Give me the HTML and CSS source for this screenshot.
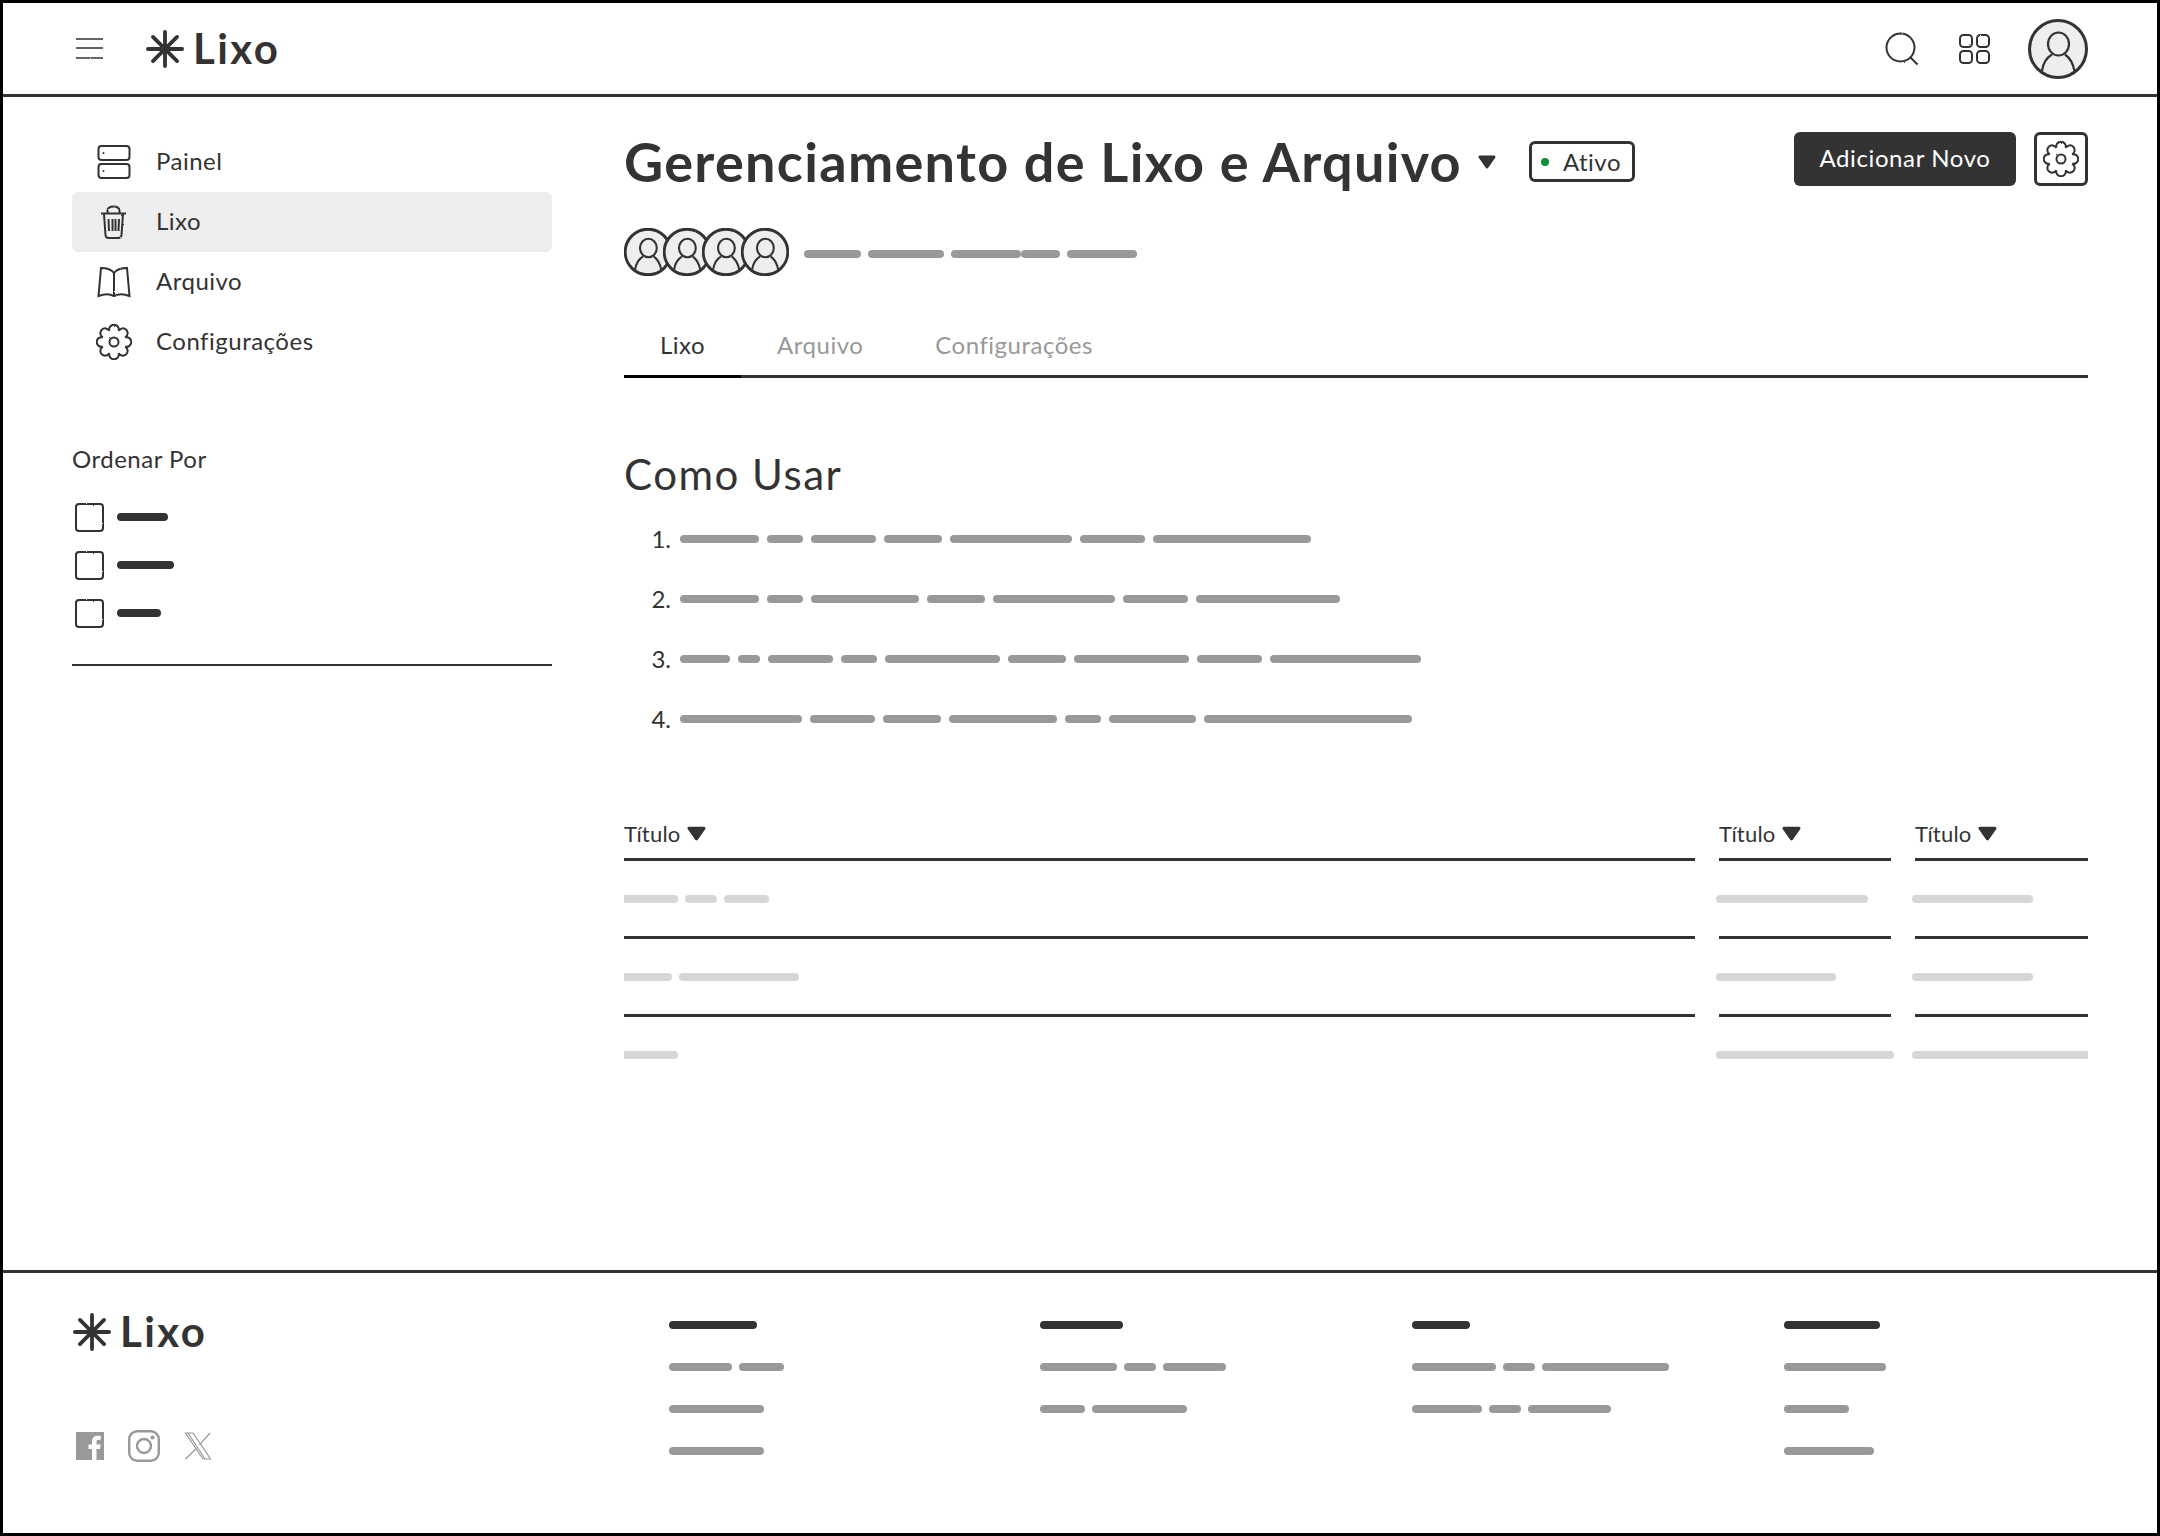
FILE: index.html
```html
<!DOCTYPE html>
<html lang="pt">
<head>
    <meta charset="UTF-8">
    <meta name="viewport" content="width=device-width, initial-scale=1.0">
    <title>Gerenciamento de Lixo e Arquivo</title>
    <link rel="stylesheet" href="styles.css">
</head>
<body>

<!-- Shared icon symbols and the filter that gives strokes a rough pencil edge -->
<svg class="defs" width="0" height="0" aria-hidden="true">
    <filter id="rough" x="-10%" y="-10%" width="120%" height="120%">
        <feTurbulence type="fractalNoise" baseFrequency="0.55" numOctaves="2" seed="4"/>
        <feDisplacementMap in="SourceGraphic" scale="1.8"/>
    </filter>
    <symbol id="star" viewBox="0 0 40 40">
        <g fill="none" stroke="#333" stroke-width="4" stroke-linecap="round">
            <path d="M20 2V38M2 20H38M7.3 7.3L32.7 32.7M32.7 7.3L7.3 32.7"/>
        </g>
    </symbol>
    <symbol id="gear" viewBox="0 0 36 36">
        <g fill="none" stroke="#333" stroke-width="2">
            <path d="M29.100 13.400A4.800 4.800 0 1 1 29.100 22.600A4.800 4.800 0 1 1 22.600 29.100A4.800 4.800 0 1 1 13.400 29.100A4.800 4.800 0 1 1 6.900 22.600A4.800 4.800 0 1 1 6.900 13.400A4.800 4.800 0 1 1 13.400 6.900A4.800 4.800 0 1 1 22.600 6.900A4.800 4.800 0 1 1 29.100 13.400Z"/>
            <circle cx="18" cy="18" r="4.500"/>
        </g>
    </symbol>
    <symbol id="person" viewBox="0 0 60 60">
        <circle class="ring" cx="30" cy="30" r="28.500" fill="#eee" stroke="#333"/>
        <g class="figure" fill="none" stroke="#333">
            <ellipse cx="30.500" cy="25" rx="10.500" ry="11.500"/>
            <path d="M14 52C15 44 18 39 24 35.500M37 35.500C42 39 45 44 46.500 52"/>
        </g>
    </symbol>
    <symbol id="caret" viewBox="0 0 18 14">
        <path d="M2 2H16L9 12Z" fill="#333" stroke="#333" stroke-width="3" stroke-linejoin="round"/>
    </symbol>
</svg>

<div class="page">

    <header class="topbar">
        <svg class="icon rough" viewBox="0 0 36 36">
            <path d="M4 8H31M4 17H31M4 27H31" fill="none" stroke="#333" stroke-width="1.600"/>
        </svg>
        <div class="logo top-logo">
            <svg class="logo-star"><use href="#star"/></svg>
            <span class="logo-text">Lixo</span>
        </div>
        <div class="topbar-right">
            <svg class="icon rough" viewBox="0 0 36 36">
                <circle cx="16.500" cy="16.500" r="14" fill="none" stroke="#333" stroke-width="2"/>
                <path d="M26.500 26.500L33.500 33.500" stroke="#333" stroke-width="2"/>
            </svg>
            <svg class="icon rough" viewBox="0 0 36 36">
                <g fill="none" stroke="#333" stroke-width="2">
                    <rect x="4" y="4" width="12" height="12" rx="3.500"/>
                    <rect x="21" y="4" width="12" height="12" rx="3.500"/>
                    <rect x="4" y="20" width="12" height="12" rx="3.500"/>
                    <rect x="21" y="20" width="12" height="12" rx="3.500"/>
                </g>
            </svg>
            <svg class="avatar-big"><use href="#person"/></svg>
        </div>
    </header>

    <div class="layout">

        <!-- Sidebar -->
        <aside class="sidebar">
            <nav class="side-nav">
                <a class="side-item">
                    <svg class="icon rough" viewBox="0 0 36 36">
                        <g fill="none" stroke="#333" stroke-width="2">
                            <rect x="2.500" y="2" width="31" height="14" rx="3"/>
                            <rect x="2.500" y="20" width="31" height="14" rx="3"/>
                        </g>
                        <circle cx="7.500" cy="9" r="1" fill="#333"/>
                        <circle cx="7.500" cy="27" r="1" fill="#333"/>
                    </svg>
                    <span>Painel</span>
                </a>
                <a class="side-item active">
                    <svg class="icon rough" viewBox="0 0 36 36">
                        <g fill="none" stroke="#333" stroke-width="2">
                            <path d="M5 9.500H30M8 10L9.500 31Q9.700 34 12.500 34H22.500Q25.300 34 25.500 31L27 10"/>
                            <path d="M11.500 9.500V7Q11.500 2.500 17.500 2.500T23.500 7V9.500"/>
                            <path d="M12.500 15L13 27M16.500 15V27M19.500 15V27M23 15L22.500 27"/>
                        </g>
                    </svg>
                    <span>Lixo</span>
                </a>
                <a class="side-item">
                    <svg class="icon rough" viewBox="0 0 36 36">
                        <g fill="none" stroke="#333" stroke-width="2">
                            <path d="M18 9C15 5 10 4 5 4L2.500 32C8 30 14 30 18 32C22 30 28 30 33.500 32L31 4C26 4 21 5 18 9V32"/>
                        </g>
                    </svg>
                    <span>Arquivo</span>
                </a>
                <a class="side-item">
                    <svg class="icon rough"><use href="#gear"/></svg>
                    <span>Configurações</span>
                </a>
            </nav>

            <div class="sort">
                <h3 class="sort-title">Ordenar Por</h3>
                <div class="sort-row"><span class="check"></span><span class="bar dark" style="width:51px"></span></div>
                <div class="sort-row"><span class="check"></span><span class="bar dark" style="width:57px"></span></div>
                <div class="sort-row"><span class="check"></span><span class="bar dark" style="width:44px"></span></div>
            </div>
        </aside>

        <!-- Main content -->
        <main class="content">
            <div class="title-row">
                <h1 class="page-title">Gerenciamento de Lixo e Arquivo</h1>
                <svg class="title-caret"><use href="#caret"/></svg>
                <span class="badge"><i class="dot"></i>Ativo</span>
                <button class="btn-add">Adicionar Novo</button>
                <button class="btn-gear"><svg class="gear-small rough"><use href="#gear"/></svg></button>
            </div>

            <div class="members">
                <div class="avatars">
                    <svg class="avatar-small"><use href="#person"/></svg>
                    <svg class="avatar-small"><use href="#person"/></svg>
                    <svg class="avatar-small"><use href="#person"/></svg>
                    <svg class="avatar-small"><use href="#person"/></svg>
                </div>
                <div class="bars">
                    <span class="bar" style="width:57px"></span>
                    <span class="bar" style="width:76px"></span>
                    <span class="bar joined" style="width:70px"></span>
                    <span class="bar" style="width:39px"></span>
                    <span class="bar" style="width:70px"></span>
                </div>
            </div>

            <div class="tabs">
                <a class="tab active">Lixo</a>
                <a class="tab">Arquivo</a>
                <a class="tab">Configurações</a>
            </div>

            <h2 class="howto-title">Como Usar</h2>
            <ol class="howto">
                <li>
                    <span class="num">1.</span>
                    <span class="bar" style="width:79px"></span><span class="bar" style="width:36px"></span><span class="bar" style="width:65px"></span><span class="bar" style="width:58px"></span><span class="bar" style="width:122px"></span><span class="bar" style="width:65px"></span><span class="bar" style="width:158px"></span>
                </li>
                <li>
                    <span class="num">2.</span>
                    <span class="bar" style="width:79px"></span><span class="bar" style="width:36px"></span><span class="bar" style="width:108px"></span><span class="bar" style="width:58px"></span><span class="bar" style="width:122px"></span><span class="bar" style="width:65px"></span><span class="bar" style="width:144px"></span>
                </li>
                <li>
                    <span class="num">3.</span>
                    <span class="bar" style="width:50px"></span><span class="bar" style="width:22px"></span><span class="bar" style="width:65px"></span><span class="bar" style="width:36px"></span><span class="bar" style="width:115px"></span><span class="bar" style="width:58px"></span><span class="bar" style="width:115px"></span><span class="bar" style="width:65px"></span><span class="bar" style="width:151px"></span>
                </li>
                <li>
                    <span class="num">4.</span>
                    <span class="bar" style="width:122px"></span><span class="bar" style="width:65px"></span><span class="bar" style="width:58px"></span><span class="bar" style="width:108px"></span><span class="bar" style="width:36px"></span><span class="bar" style="width:87px"></span><span class="bar" style="width:208px"></span>
                </li>
            </ol>

            <div class="table">
                <div class="th">Título <svg class="th-caret"><use href="#caret"/></svg></div>
                <div class="th">Título <svg class="th-caret"><use href="#caret"/></svg></div>
                <div class="th">Título <svg class="th-caret"><use href="#caret"/></svg></div>

                <div class="td"><span class="bar light" style="width:57px"></span><span class="bar light" style="width:32px"></span><span class="bar light" style="width:45px"></span></div>
                <div class="td"><span class="bar light" style="width:152px"></span></div>
                <div class="td"><span class="bar light" style="width:121px"></span></div>

                <div class="td"><span class="bar light" style="width:51px"></span><span class="bar light" style="width:120px"></span></div>
                <div class="td"><span class="bar light" style="width:120px"></span></div>
                <div class="td"><span class="bar light" style="width:121px"></span></div>

                <div class="td last"><span class="bar light" style="width:57px"></span></div>
                <div class="td last"><span class="bar light" style="width:178px"></span></div>
                <div class="td last"><span class="bar light" style="width:180px"></span></div>
            </div>
        </main>
    </div>

    <footer class="footer">
        <div class="footer-brand">
            <div class="logo">
                <svg class="logo-star"><use href="#star"/></svg>
                <span class="logo-text">Lixo</span>
            </div>
            <div class="socials">
                <svg class="icon" viewBox="0 0 36 36">
                    <rect x="4" y="4" width="28" height="28" fill="#999"/>
                    <path d="M24.500 32V21H28L28.600 16.500H24.500V14C24.500 12.700 25 11.800 26.800 11.800H28.800V8C28.300 7.900 27 7.800 25.500 7.800C22.300 7.800 20 9.800 20 13.500V16.500H16.500V21H20V32Z" fill="#fff"/>
                </svg>
                <svg class="icon" viewBox="0 0 36 36">
                    <g fill="none" stroke="#999" stroke-width="2.400">
                        <rect x="3.200" y="3.200" width="29.600" height="29.600" rx="8"/>
                        <circle cx="18" cy="18" r="7"/>
                    </g>
                    <circle cx="26.500" cy="9.500" r="2" fill="#999"/>
                </svg>
                <svg class="icon" viewBox="0 0 36 36">
                    <g fill="none" stroke="#999" stroke-width="1.200">
                        <path d="M5.500 5H13L30.500 31H23Z"/>
                        <path d="M30 5L19.500 16.800M16 20.800L5.500 31"/>
                        <path d="M8 5L25 31"/>
                    </g>
                </svg>
            </div>
        </div>

        <div class="footer-col">
            <div class="line"><span class="bar dark" style="width:88px"></span></div>
            <div class="line"><span class="bar" style="width:63px"></span><span class="bar" style="width:45px"></span></div>
            <div class="line"><span class="bar" style="width:95px"></span></div>
            <div class="line"><span class="bar" style="width:95px"></span></div>
        </div>
        <div class="footer-col">
            <div class="line"><span class="bar dark" style="width:83px"></span></div>
            <div class="line"><span class="bar" style="width:77px"></span><span class="bar" style="width:32px"></span><span class="bar" style="width:63px"></span></div>
            <div class="line"><span class="bar" style="width:45px"></span><span class="bar" style="width:95px"></span></div>
        </div>
        <div class="footer-col">
            <div class="line"><span class="bar dark" style="width:58px"></span></div>
            <div class="line"><span class="bar" style="width:84px"></span><span class="bar" style="width:32px"></span><span class="bar" style="width:127px"></span></div>
            <div class="line"><span class="bar" style="width:70px"></span><span class="bar" style="width:32px"></span><span class="bar" style="width:83px"></span></div>
        </div>
        <div class="footer-col">
            <div class="line"><span class="bar dark" style="width:96px"></span></div>
            <div class="line"><span class="bar" style="width:102px"></span></div>
            <div class="line"><span class="bar" style="width:65px"></span></div>
            <div class="line"><span class="bar" style="width:90px"></span></div>
        </div>
    </footer>
</div>

</body>
</html>
```
FILE: styles.css
```css
* {
    box-sizing: border-box;
}
body {
    margin: 0;
    background-color: #fff;
    color: #333;
    font-family: Lato, "Noto Sans", sans-serif;
}
h1, h2, h3, ol {
    margin: 0;
    padding: 0;
}
.defs {
    display: block;
    position: absolute;
}
.page {
    display: flex;
    flex-direction: column;
    width: 2160px;
    height: 1536px;
    border: 3px solid #000;
}
.icon {
    display: block;
    flex: none;
    width: 36px;
    height: 36px;
}
.rough {
    filter: url(#rough);
}
.ring {
    stroke-width: var(--ring, 3px);
}
.figure {
    stroke-width: var(--figure, 2.2px);
}

/* Placeholder text bars */
.bar {
    display: block;
    flex: none;
    height: 8px;
    border-radius: 4px;
    background-color: #999;
}
.bar.dark {
    background-color: #333;
}
.bar.light {
    background-color: #d6d6d6;
}

/* Top bar */
.topbar {
    display: flex;
    align-items: center;
    flex: none;
    height: 94px;
    padding: 0 69px;
    border-bottom: 3px solid #333;
}
.logo {
    display: flex;
    align-items: center;
    height: 40px;
    margin-left: 1px;
}
.top-logo {
    margin-left: 38px;
}
.logo-star {
    flex: none;
    width: 38px;
    height: 38px;
}
.logo-text {
    margin-left: 9px;
    padding-bottom: 2px;
    font-size: 42px;
    font-weight: 700;
    letter-spacing: 2.4px;
}
.topbar-right {
    display: flex;
    align-items: center;
    gap: 36px;
    margin-left: auto;
}
.avatar-big {
    display: block;
    width: 60px;
    height: 60px;
}

.layout {
    display: flex;
    flex: 1;
    padding: 35px 69px 0;
    gap: 72px;
}

/* Sidebar */
.sidebar {
    flex: none;
    width: 480px;
}
.side-item {
    display: flex;
    align-items: center;
    gap: 24px;
    height: 60px;
    padding-left: 24px;
    border-radius: 6px;
    font-size: 24px;
    letter-spacing: 0.5px;
}
.side-item span {
    padding-bottom: 3px;
}
.side-item.active {
    background-color: #eee;
}
.sort {
    margin-top: 72px;
    padding-bottom: 27px;
    border-bottom: 2px solid #333;
}
.sort-title {
    margin-bottom: 19px;
    font-size: 24px;
    font-weight: 400;
    line-height: 30px;
    letter-spacing: 0.5px;
}
.sort-row {
    display: flex;
    align-items: center;
    gap: 13px;
    height: 48px;
    padding-left: 3px;
}
.check {
    width: 29px;
    height: 29px;
    border: 2px solid #333;
    border-radius: 4px;
    filter: url(#rough);
}

/* Main content */
.content {
    flex: 1;
    min-width: 0;
}
.title-row {
    display: flex;
    align-items: center;
    height: 54px;
}
.page-title {
    padding-top: 5px;
    font-size: 54px;
    font-weight: 700;
    line-height: 54px;
    letter-spacing: 1.3px;
    white-space: nowrap;
}
.title-caret {
    flex: none;
    width: 18px;
    height: 14px;
    margin: 6px 0 0 16px;
}
.badge {
    display: flex;
    align-items: center;
    height: 41px;
    margin: 5px 0 0 33px;
    padding: 0 11px 0 9px;
    border: 3px solid #333;
    border-radius: 6px;
    font-size: 24px;
    letter-spacing: 0.5px;
}
.dot {
    width: 8px;
    height: 8px;
    margin-right: 14px;
    border-radius: 50%;
    background-color: #0a8f3c;
}
.btn-add {
    width: 222px;
    height: 54px;
    margin-left: auto;
    padding: 0 0 3px;
    border: none;
    border-radius: 6px;
    background-color: #333;
    color: #fff;
    font-family: inherit;
    font-size: 24px;
    letter-spacing: 0.6px;
}
.btn-gear {
    display: flex;
    align-items: center;
    justify-content: center;
    width: 54px;
    height: 54px;
    margin-left: 18px;
    padding: 0;
    border: 3px solid #333;
    border-radius: 6px;
    background-color: #fff;
}
.gear-small {
    width: 36px;
    height: 36px;
}

.members {
    display: flex;
    align-items: center;
    gap: 15px;
    margin-top: 42px;
}
.avatars {
    display: flex;
    flex-direction: row-reverse;
    width: 165px;
    --ring: 3.6px;
    --figure: 2.6px;
}
.avatar-small {
    display: block;
    flex: none;
    width: 48px;
    height: 48px;
    margin-left: -9px;
}
.avatar-small:last-child {
    margin-left: 0;
}
.bars {
    display: flex;
    gap: 7px;
    margin-top: 3px;
}
.bars .joined {
    margin-right: -7px;
}

.tabs {
    display: flex;
    height: 60px;
    margin-top: 42px;
    border-bottom: 3px solid #333;
}
.tab {
    display: flex;
    align-items: center;
    height: 60px;
    padding: 0 36px 4px;
    color: #999;
    font-size: 24px;
    letter-spacing: 0.5px;
    border-bottom: 3px solid transparent;
}
.tab.active {
    color: #333;
    border-bottom-color: #000;
}

.howto-title {
    margin-top: 72px;
    font-size: 42px;
    font-weight: 400;
    line-height: 48px;
    letter-spacing: 1.5px;
}
.howto {
    margin-top: 11px;
    list-style: none;
}
.howto li {
    display: flex;
    align-items: center;
    gap: 8px;
    height: 60px;
}
.howto .num {
    width: 47px;
    margin-right: 1px;
    padding-bottom: 2px;
    font-size: 24px;
    text-align: right;
}

/* Table */
.table {
    display: grid;
    grid-template-columns: 1fr 172px 173px;
    column-gap: 24px;
    margin-top: 61px;
    overflow: hidden;
}
.th {
    display: flex;
    align-items: center;
    gap: 6px;
    height: 51px;
    padding-bottom: 2px;
    border-bottom: 3px solid #333;
    font-size: 22px;
    letter-spacing: 0.2px;
}
.th-caret {
    width: 19px;
    height: 15px;
}
.td {
    display: flex;
    align-items: center;
    gap: 7px;
    height: 78px;
    border-bottom: 3px solid #333;
}
.td .bar:first-child {
    margin-left: -3px;
}
.td.last {
    height: 75px;
    border-bottom: none;
}

/* Footer */
.footer {
    display: grid;
    grid-template-columns: 597px 371px 372px 372px 1fr;
    flex: none;
    height: 263px;
    padding-left: 69px;
    border-top: 3px solid #333;
}
.footer-brand {
    padding-top: 39px;
}
.socials {
    display: flex;
    gap: 18px;
    margin-top: 76px;
}
.footer-col {
    display: flex;
    flex-direction: column;
    gap: 34px;
    padding-top: 48px;
}
.line {
    display: flex;
    gap: 7px;
}
```
